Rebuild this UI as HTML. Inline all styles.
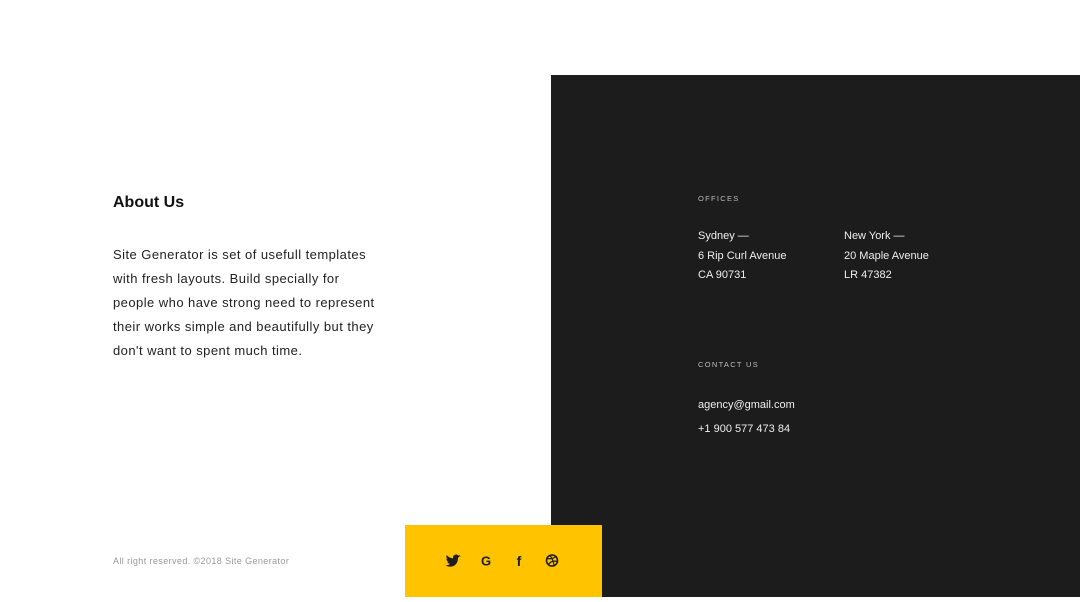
<!DOCTYPE html>
<html><head><meta charset="utf-8"><style>
*{margin:0;padding:0;box-sizing:border-box}
body{width:1080px;height:597px;position:relative;background:#fff;font-family:"Liberation Sans",sans-serif;overflow:hidden}
.dark{position:absolute;left:551px;top:75px;width:529px;height:522px;background:#1c1c1d}
.t{position:absolute;white-space:nowrap}
h2{position:absolute;left:113px;top:194px;font-size:16px;font-weight:bold;color:#111}
.p{position:absolute;left:113px;top:243px;font-size:13px;line-height:24px;color:#222;letter-spacing:.45px}
.lab{font-size:7.5px;letter-spacing:1.3px;color:#bbb}
.w{font-size:11px;color:#eee;line-height:19.5px}
.y{position:absolute;left:405px;top:525px;width:197px;height:72px;background:#ffc300}
</style></head><body>
<div class="dark"></div>
<h2>About Us</h2>
<div class="p">Site Generator is set of usefull templates<br>with fresh layouts. Build specially for<br>people who have strong need to represent<br>their works simple and beautifully but they<br>don't want to spent much time.</div>
<div class="t" style="left:113px;top:556px;font-size:9px;color:#999;letter-spacing:.4px">All right reserved. ©2018 Site Generator</div>
<div class="t lab" style="left:698px;top:194px">OFFICES</div>
<div class="t w" style="left:698px;top:227px">Sydney —<br>6 Rip Curl Avenue<br>CA 90731</div>
<div class="t w" style="left:844px;top:227px">New York —<br>20 Maple Avenue<br>LR 47382</div>
<div class="t lab" style="left:698px;top:360px">CONTACT US</div>
<div class="t w" style="left:698px;top:393px;line-height:24px">agency@gmail.com<br>+1 900 577 473 84</div>
<div class="y">
<svg width="197" height="72" viewBox="0 0 197 72">
<g transform="translate(12,-1)">
<path d="M44 32c-1 .5-1.5.5-2 .5.7-.5 1-1 1.3-1.7-.6.4-1.3.6-2 .8a3 3 0 0 0-5.2 2.7c-2.5-.1-4.8-1.3-6.3-3.2-.8 1.4-.4 3.1.9 4-.5 0-1-.2-1.4-.4 0 1.5 1 2.7 2.4 3-.4.1-.9.2-1.4.1.4 1.2 1.5 2 2.8 2.1-1.3 1-3 1.5-4.6 1.3 5.5 3.4 12.7.6 12.5-7.5.8-.5 1.5-1 2-1.7z" fill="#1c1c1d"/>
</g>
<text x="81" y="40.5" font-family="Liberation Sans" font-weight="bold" font-size="13" text-anchor="middle" fill="#1c1c1d">G</text>
<text x="114" y="41" font-family="Liberation Sans" font-weight="bold" font-size="14" text-anchor="middle" fill="#1c1c1d">f</text>
<circle cx="147" cy="35.5" r="5.5" fill="none" stroke="#1c1c1d" stroke-width="1.6"/>
<path d="M142 33.5c3 .5 7 0 9.5-2.5M143.5 39.5c2-3 5-4 9-3M145 30.5c2 2.5 3.5 6 4 10" fill="none" stroke="#1c1c1d" stroke-width="1.2"/>
</svg>
</div>
</body></html>
